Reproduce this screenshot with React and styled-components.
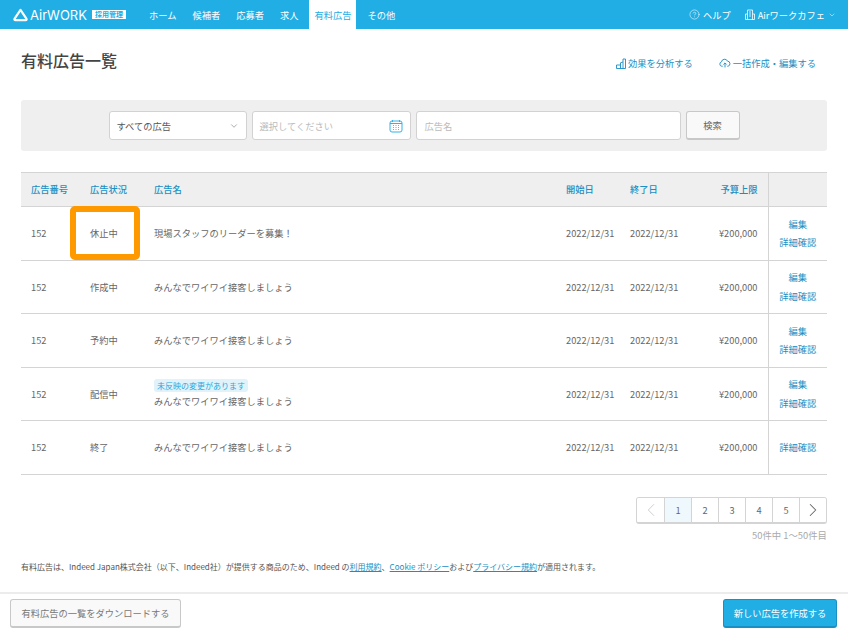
import React from "react";
import styled, { createGlobalStyle } from "styled-components";
import { ChevronDown, ChevronLeft, ChevronRight, CircleHelp } from "lucide-react";

const navItems = ["ホーム", "候補者", "応募者", "求人", "有料広告", "その他"];
const ACTIVE_NAV = "有料広告";

const rows = [
  { status: "休止中", name: "現場スタッフのリーダーを募集！", highlight: true, edit: true },
  { status: "作成中", name: "みんなでワイワイ接客しましょう", edit: true },
  { status: "予約中", name: "みんなでワイワイ接客しましょう", edit: true },
  { status: "配信中", name: "みんなでワイワイ接客しましょう", edit: true, notice: "未反映の変更があります" },
  { status: "終了", name: "みんなでワイワイ接客しましょう" },
];

const App = () => {
  return (
    <>
      <GlobalStyle />
      <Page>
        <Header>
          <Logo>
            <svg width="15" height="14" viewBox="0 0 15 14" fill="none">
              <path
                d="M7.5 1.8 13.4 10.6a1 1 0 0 1-.8 1.6H2.4a1 1 0 0 1-.8-1.6L7.5 1.8Z"
                stroke="#fff"
                strokeWidth="2.2"
                strokeLinejoin="round"
              />
            </svg>
            <LogoText>AirWORK</LogoText>
            <LogoBadge>採用管理</LogoBadge>
          </Logo>
          <Nav>
            {navItems.map((item) => (
              <NavItem key={item} $active={item === ACTIVE_NAV}>
                {item}
              </NavItem>
            ))}
          </Nav>
          <HeaderRight>
            <HeaderLink>
              <CircleHelp size={11} strokeWidth={1.2} />
              ヘルプ
            </HeaderLink>
            <HeaderLink>
              <svg width="10" height="11" viewBox="0 0 10 11" fill="none" stroke="#fff" strokeWidth="0.8">
                <path d="M2.5 10.5V1h5v9.5M.5 10.5V5h2M7.5 5h2v5.5M.5 10.5h9M4 3h2M4 5h2M4 7h2" />
              </svg>
              <ShopName>Airワーク カフェ</ShopName>
              <ChevronDown size={8} strokeWidth={1.5} />
            </HeaderLink>
          </HeaderRight>
        </Header>

        <Main>
          <TitleRow>
            <Title>有料広告一覧</Title>
            <TitleActions>
              <ActionLink>
                <svg width="10" height="11" viewBox="0 0 10 11" fill="none" stroke="#1a8fc4" strokeWidth="0.9">
                  <path d="M.5 10.5h9V1L7 1v9.5M7 4 4.5 4.8v5.7M4.5 7H.5v3.5" />
                </svg>
                効果を分析する
              </ActionLink>
              <ActionLink>
                <svg width="12" height="10" viewBox="0 0 13 10" fill="none" stroke="#1a8fc4" strokeWidth="1">
                  <path d="M4 8.5H3a2.4 2.4 0 0 1-.3-4.7A3.4 3.4 0 0 1 9.2 3a2.8 2.8 0 0 1 .6 5.5H9M6.5 9.8V5M4.8 6.6l1.7-1.7 1.7 1.7" />
                </svg>
                一括作成・編集する
              </ActionLink>
            </TitleActions>
          </TitleRow>

          <SearchBar>
            <SelectBox>
              すべての広告
              <ChevronDown size={10} strokeWidth={1.3} color="#666" />
            </SelectBox>
            <DateBox>
              選択してください
              <svg width="14" height="14" viewBox="0 0 14 14" fill="none">
                <rect x="1" y="2" width="12" height="11" rx="2" stroke="#35b1e6" strokeWidth="1" />
                <path d="M1 4.5h12" stroke="#35b1e6" strokeWidth="1" />
                <path d="M3.5 1v2M10.5 1v2" stroke="#35b1e6" strokeWidth="1" />
                <path
                  d="M4 6.5h1M6.5 6.5h1M9 6.5h1M4 8.5h1M6.5 8.5h1M9 8.5h1M4 10.5h1M6.5 10.5h1M9 10.5h1"
                  stroke="#7f8c96"
                  strokeWidth="0.8"
                />
              </svg>
            </DateBox>
            <NameBox>広告名</NameBox>
            <SearchButton>検索</SearchButton>
          </SearchBar>

          <Table>
            <colgroup>
              <col width="59" />
              <col width="64" />
              <col width="412" />
              <col width="64" />
              <col width="64" />
              <col width="84" />
              <col width="59" />
            </colgroup>
            <thead>
              <tr>
                <Th>広告番号</Th>
                <Th>広告状況</Th>
                <Th>広告名</Th>
                <Th>開始日</Th>
                <Th>終了日</Th>
                <Th $right>予算上限</Th>
                <ActionTh />
              </tr>
            </thead>
            <tbody>
              {rows.map((row) => (
                <tr key={row.status}>
                  <Td>152</Td>
                  <StatusTd>
                    {row.status}
                    {row.highlight && <Highlight />}
                  </StatusTd>
                  <Td>
                    {row.notice && <Notice>{row.notice}</Notice>}
                    <div>{row.name}</div>
                  </Td>
                  <Td>2022/12/31</Td>
                  <Td>2022/12/31</Td>
                  <Td $right>¥200,000</Td>
                  <ActionTd>
                    {row.edit && <RowLink>編集</RowLink>}
                    <RowLink>詳細確認</RowLink>
                  </ActionTd>
                </tr>
              ))}
            </tbody>
          </Table>

          <PagerArea>
            <Pager>
              <PageCell $muted>
                <ChevronLeft size={22} strokeWidth={1} />
              </PageCell>
              {[1, 2, 3, 4, 5].map((n) => (
                <PageCell key={n} $current={n === 1}>
                  {n}
                </PageCell>
              ))}
              <PageCell>
                <ChevronRight size={22} strokeWidth={1.1} />
              </PageCell>
            </Pager>
            <PageCount>50件中 1〜50件目</PageCount>
          </PagerArea>

          <Terms>
            有料広告は、Indeed Japan株式会社（以下、Indeed社）が提供する商品のため、Indeed の
            <TermsLink>利用規約</TermsLink>、<TermsLink>Cookie ポリシー</TermsLink>および
            <TermsLink>プライバシー規約</TermsLink>が適用されます。
          </Terms>
        </Main>

        <Footer>
          <DownloadButton>有料広告の一覧をダウンロードする</DownloadButton>
          <CreateButton>新しい広告を作成する</CreateButton>
        </Footer>
      </Page>
    </>
  );
};

const GlobalStyle = createGlobalStyle`
  * {
    box-sizing: border-box;
  }
  body {
    margin: 0;
    background: #fff;
    color: #444;
    font-family: "Noto Sans CJK JP", "Noto Sans", sans-serif;
  }
`;

const Page = styled.div`
  display: flex;
  flex-direction: column;
  width: 848px;
  height: 632px;
  overflow: hidden;
`;

const Header = styled.header`
  display: flex;
  align-items: stretch;
  height: 29px;
  padding-left: 13px;
  padding-right: 12px;
  background-color: #20aee5;
  color: #fff;
  font-size: 9.25px;
`;

const Logo = styled.div`
  display: flex;
  align-items: center;
  width: 131px;
`;

const LogoText = styled.span`
  margin-left: 2px;
  font-family: "Inter", sans-serif;
  font-size: 13px;
  font-weight: 400;
`;

const LogoBadge = styled.span`
  margin-left: 5px;
  padding: 0 3px;
  height: 9px;
  background: #fff;
  color: #20aee5;
  font-size: 7px;
  font-weight: 700;
  line-height: 9px;
  white-space: nowrap;
`;

const Nav = styled.nav`
  display: flex;
`;

const NavItem = styled.div`
  display: flex;
  align-items: center;
  padding: 0 5px;
  margin-right: 6px;
  background: ${(p) => (p.$active ? "#fff" : "transparent")};
  color: ${(p) => (p.$active ? "#20aee5" : "#fff")};
`;

const HeaderRight = styled.div`
  display: flex;
  align-items: center;
  gap: 14px;
  margin-left: auto;
`;

const HeaderLink = styled.div`
  display: flex;
  align-items: center;
  gap: 3px;
`;

const ShopName = styled.span`
  word-spacing: -2px;
`;

const Main = styled.main`
  display: flex;
  flex-direction: column;
  flex: 1;
  padding: 0 21px;
`;

const TitleRow = styled.div`
  display: flex;
  align-items: flex-start;
  justify-content: space-between;
  height: 71px;
  padding-top: 20px;
`;

const Title = styled.h1`
  margin: 0;
  font-size: 16px;
  font-weight: 500;
  line-height: 23px;
  color: #444;
`;

const TitleActions = styled.div`
  display: flex;
  gap: 26px;
  padding-top: 7px;
  padding-right: 11px;
`;

const ActionLink = styled.a`
  display: flex;
  align-items: center;
  gap: 2px;
  color: #1a8fc4;
  font-size: 9.25px;
  line-height: 14px;
`;

const SearchBar = styled.div`
  display: flex;
  justify-content: center;
  align-items: center;
  gap: 5px;
  height: 51px;
  background: #efefef;
  border-radius: 3px;
`;

const Field = styled.div`
  display: flex;
  align-items: center;
  justify-content: space-between;
  height: 29px;
  padding: 0 7px;
  background: #fff;
  border: 1px solid #d2d2d2;
  border-radius: 3px;
  font-size: 9.25px;
`;

const SelectBox = styled(Field)`
  width: 138px;
  color: #555;
`;

const DateBox = styled(Field)`
  width: 159px;
  color: #bbb;
`;

const NameBox = styled(Field)`
  width: 265px;
  padding-left: 8px;
  color: #bbb;
`;

const SearchButton = styled.button`
  width: 54px;
  height: 29px;
  padding: 0;
  background: #f9f9f9;
  border: 1px solid #c8c8c8;
  border-bottom-width: 2px;
  border-radius: 3px;
  color: #666;
  font-family: inherit;
  font-size: 9.25px;
`;

const Table = styled.table`
  width: 806px;
  margin-top: 21px;
  border-collapse: collapse;
  table-layout: fixed;
  font-size: 9.25px;
`;

const Th = styled.th`
  height: 34px;
  padding: 0 10px 2px;
  background: #efefef;
  border-top: 1px solid #d4d4d4;
  border-bottom: 1px solid #d4d4d4;
  color: #1a8fc4;
  font-weight: 500;
  text-align: ${(p) => (p.$right ? "right" : "left")};
  white-space: nowrap;
`;

const ActionTh = styled(Th)`
  border-left: 1px solid #d4d4d4;
`;

const Td = styled.td`
  height: 53.5px;
  padding: 0 10px;
  border-bottom: 1px solid #d4d4d4;
  color: #666;
  line-height: 14px;
  text-align: ${(p) => (p.$right ? "right" : "left")};
  white-space: nowrap;
`;

const StatusTd = styled(Td)`
  position: relative;
`;

const Highlight = styled.span`
  position: absolute;
  top: -1px;
  left: -10px;
  width: 70px;
  height: 54px;
  border: 6px solid #ff9900;
  border-radius: 5px;
`;

const Notice = styled.span`
  display: block;
  width: fit-content;
  margin-bottom: 2px;
  padding: 0 3px;
  background: #e0f2fa;
  border-radius: 3px;
  color: #2aa8de;
  font-size: 8px;
  line-height: 13px;
`;

const ActionTd = styled(Td)`
  padding: 0;
  border-left: 1px solid #d4d4d4;
  text-align: center;
`;

const RowLink = styled.a`
  display: block;
  color: #1a8fc4;
  line-height: 18.5px;
`;

const PagerArea = styled.div`
  display: flex;
  flex-direction: column;
  align-items: flex-end;
  margin-top: 22px;
`;

const Pager = styled.div`
  display: flex;
  height: 27px;
  border: 1px solid #d4d4d4;
  border-bottom-width: 2px;
  border-radius: 3px;
  overflow: hidden;
`;

const PageCell = styled.div`
  display: flex;
  align-items: center;
  justify-content: center;
  width: 27px;
  background: ${(p) => (p.$current ? "#eff8fc" : "#fff")};
  border-left: 1px solid #d4d4d4;
  color: ${(p) => (p.$muted ? "#ccc" : "#666")};
  font-size: 9.25px;

  &:first-child {
    border-left: 0;
  }
`;

const PageCount = styled.div`
  margin-top: 4px;
  color: #aaa;
  font-size: 9.4px;
  line-height: 14px;
`;

const Terms = styled.p`
  margin: 19px 0 0;
  color: #555;
  font-size: 8px;
  line-height: 12px;
  white-space: nowrap;
`;

const TermsLink = styled.a`
  color: #1a8fc4;
  text-decoration: underline;
`;

const Footer = styled.footer`
  display: flex;
  align-items: center;
  justify-content: space-between;
  height: 40px;
  padding: 0 11px 0 10px;
  border-top: 2px solid #ececec;
`;

const DownloadButton = styled.button`
  width: 171px;
  height: 29px;
  padding: 0;
  background: #f9f9f9;
  border: 1px solid #c8c8c8;
  border-bottom-width: 2px;
  border-radius: 3px;
  color: #777;
  font-family: inherit;
  font-size: 9.25px;
`;

const CreateButton = styled.button`
  width: 114px;
  height: 29px;
  padding: 0;
  background: #20aee5;
  border: 1px solid #1a8fc4;
  border-bottom-width: 2px;
  border-radius: 3px;
  color: #fff;
  font-family: inherit;
  font-size: 9.25px;
`;

export default App;
